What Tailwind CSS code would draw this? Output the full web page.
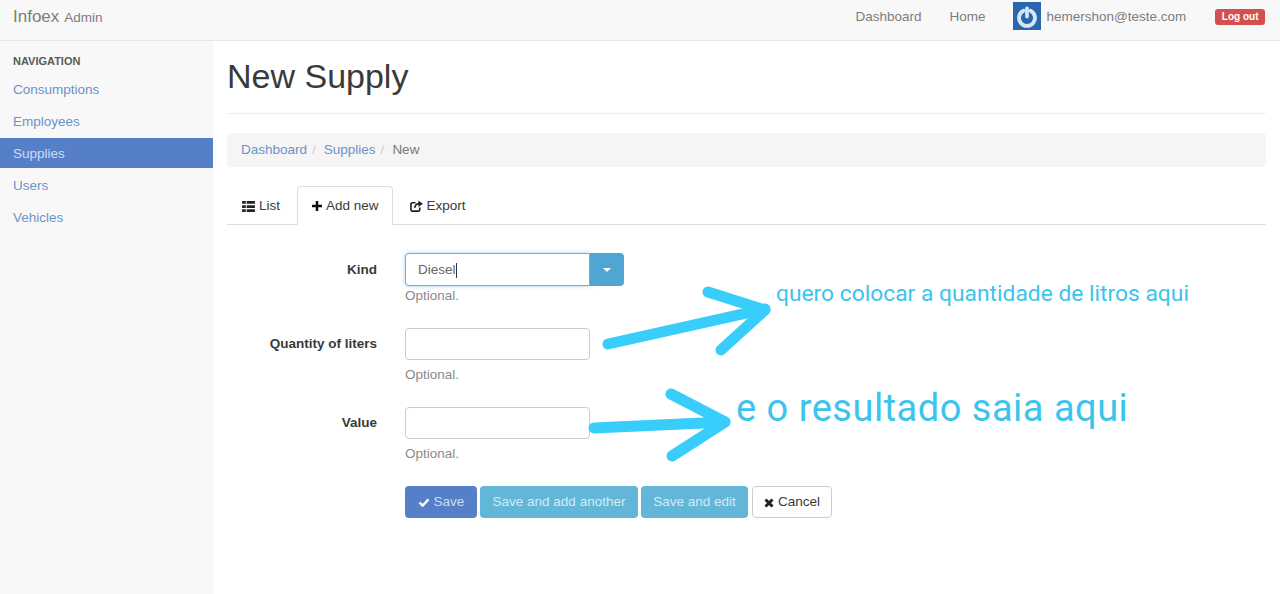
<!DOCTYPE html>
<html lang="en">
<head>
    <meta charset="UTF-8">
    <title>Infoex Admin</title>
    <script src="https://cdn.jsdelivr.net/npm/@tailwindcss/browser@4"></script>
</head>
<body class="relative h-[594px] overflow-hidden bg-white font-['Liberation_Sans',sans-serif] text-[13.5px] text-[#3a3a3a]">
    <!-- Navbar -->
    <nav class="flex h-[41px] items-center border-b border-[#e7e7e7] bg-[#f8f8f8] pb-[8px] pl-[13px] pr-[15px] text-[#7d7d7d]">
        <div class="flex items-baseline gap-[5px] pt-[2px]">
            <span class="text-[17px]">Infoex</span>
            <span class="text-[13.5px]">Admin</span>
        </div>
        <div class="ml-auto flex items-center">
            <span class="pt-[2px]">Dashboard</span>
            <span class="ml-[28px] pt-[2px]">Home</span>
            <div class="ml-[27px] flex h-[28px] w-[28px] items-center justify-center bg-[#2a66b0]">
                <svg viewBox="0 0 28 28" class="h-[28px] w-[28px]" fill="none" stroke="#d5e6f5" stroke-width="3.800" stroke-linecap="round">
                    <path d="M10.400 8.800a8 8 0 1 0 7.200 0" />
                    <path d="M14 6.500v8" />
                </svg>
            </div>
            <span class="ml-[6px] pt-[2px]">hemershon@teste.com</span>
            <span class="ml-[29px] mt-[2px] rounded-[3px] bg-[#d4504f] px-[6.500px] pb-[2px] pt-[1px] text-[10px] font-bold leading-[13px] text-white">Log out</span>
        </div>
    </nav>

    <div class="flex h-[553px]">
        <!-- Sidebar -->
        <aside class="w-[213px] shrink-0 bg-[#f8f8f8] pt-[13px]">
            <div class="px-[13px] text-[11px] font-bold leading-[14px] text-[#5a5a5a]">NAVIGATION</div>
            <ul class="mt-[6px] text-[#6c93c9]">
                <li class="flex h-[32px] items-center px-[13px]">Consumptions</li>
                <li class="flex h-[32px] items-center px-[13px]">Employees</li>
                <li class="mb-[2px] flex h-[30px] items-center bg-[#5580c8] px-[13px] pt-[2px] text-[#cfdcf2]">Supplies</li>
                <li class="flex h-[32px] items-center px-[13px]">Users</li>
                <li class="flex h-[32px] items-center px-[13px]">Vehicles</li>
            </ul>
        </aside>

        <!-- Main -->
        <main class="min-w-0 flex-1 pl-[14px] pr-[14px]">
            <h1 class="flex h-[73px] items-center border-b border-[#eee] pb-[2px] text-[34px] leading-none text-[#3a3a3a]">New Supply</h1>

            <div class="mt-[19px] flex h-[34px] items-center rounded-[4px] bg-[#f5f5f5] px-[14px] pt-[1px]">
                <span class="text-[#6c93c9]">Dashboard</span>
                <span class="mx-[5px] text-[#ccc]">/</span>
                <span class="ml-[3px] text-[#6c93c9]">Supplies</span>
                <span class="mx-[5px] text-[#ccc]">/</span>
                <span class="ml-[3px] text-[#777]">New</span>
            </div>

            <!-- Tabs -->
            <div class="mt-[19px] flex h-[39px] gap-[2px] border-b border-[#ddd]">
                <div class="flex items-center gap-[4px] px-[15px] pt-[2px]">
                    <svg viewBox="0 0 14 12" class="h-[11px] w-[13px]" fill="#222">
                        <path d="M0 0h4v3H0zM5 0h9v3H5zM0 4.500h4v3H0zM5 4.500h9v3H5zM0 9h4v3H0zM5 9h9v3H5z" />
                    </svg>
                    <span>List</span>
                </div>
                <div class="flex h-[39px] items-center gap-[4px] rounded-t-[4px] border border-b-0 border-[#ddd] bg-white pl-[14px] pr-[13px]">
                    <svg viewBox="0 0 12 12" class="h-[10px] w-[10px]" fill="#111">
                        <path d="M4.500 0h3v4.500H12v3H7.500V12h-3V7.500H0v-3h4.500z" />
                    </svg>
                    <span>Add new</span>
                </div>
                <div class="flex items-center gap-[4px] px-[15px] pt-[2px]">
                    <svg viewBox="0 0 14 13" class="h-[12px] w-[13px]" fill="none" stroke="#222" stroke-width="1.800">
                        <path d="M6 3H2.500A1.500 1.500 0 0 0 1 4.500v6A1.500 1.500 0 0 0 2.500 12h6.500a1.500 1.500 0 0 0 1.500-1.500V8" />
                        <path d="M5 8.500C5.500 6 7.500 4 10 4" />
                        <path d="M9 0.500L14 4L9 7.500z" fill="#222" stroke="none" />
                    </svg>
                    <span>Export</span>
                </div>
            </div>

            <!-- Form -->
            <form class="mt-[28px]">
                <div class="flex">
                    <label class="w-[150px] shrink-0 pt-[9px] text-right font-bold leading-[16px]">Kind</label>
                    <div class="ml-[28px]">
                        <div class="flex h-[33px] w-[219px]">
                            <div class="flex w-[185px] items-center rounded-l-[4px] border border-[#66afe9] bg-white pl-[12px] pt-[1px] text-[#666] shadow-[0_0_4px_rgba(102,175,233,0.6)]">
                                Diesel<span class="h-[15px] w-px bg-[#333]"></span>
                            </div>
                            <div class="flex w-[34px] items-center justify-center rounded-r-[4px] bg-[#4fa6d3]">
                                <span class="h-0 w-0 border-x-[4px] border-t-[4px] border-x-transparent border-t-white"></span>
                            </div>
                        </div>
                        <p class="mt-[2px] leading-[16px] text-[#8a8a8a]">Optional.</p>
                    </div>
                </div>

                <div class="mt-[24px] flex">
                    <label class="w-[150px] shrink-0 pt-[8px] text-right font-bold leading-[16px]">Quantity of liters</label>
                    <div class="ml-[28px]">
                        <div class="h-[32px] w-[185px] rounded-[4px] border border-[#ccc] bg-white"></div>
                        <p class="mt-[7px] leading-[16px] text-[#8a8a8a]">Optional.</p>
                    </div>
                </div>

                <div class="mt-[24px] flex">
                    <label class="w-[150px] shrink-0 pt-[8px] text-right font-bold leading-[16px]">Value</label>
                    <div class="ml-[28px]">
                        <div class="h-[32px] w-[185px] rounded-[4px] border border-[#ccc] bg-white"></div>
                        <p class="mt-[7px] leading-[16px] text-[#8a8a8a]">Optional.</p>
                    </div>
                </div>

                <div class="ml-[178px] mt-[24px] flex gap-[3px]">
                    <button type="button" class="flex h-[32px] w-[72px] items-center justify-center gap-[4px] rounded-[4px] bg-[#5580c8] pt-[1px] text-[#cfdcf2]">
                        <svg viewBox="0 0 12 10" class="h-[9px] w-[12px]" fill="none" stroke="#fff" stroke-width="2.600">
                            <path d="M1 5l3.500 3.500L11 1.500" />
                        </svg>
                        Save
                    </button>
                    <button type="button" class="h-[32px] w-[158px] rounded-[4px] bg-[#62b6d8] pt-[1px] text-[#d4ebf5]">Save and add another</button>
                    <button type="button" class="h-[32px] w-[107px] rounded-[4px] bg-[#62b6d8] pt-[1px] text-[#d4ebf5]">Save and edit</button>
                    <button type="button" class="ml-px flex h-[32px] w-[80px] items-center justify-center gap-[4px] rounded-[4px] border border-[#ccc] bg-white pt-[1px]">
                        <svg viewBox="0 0 10 10" class="h-[10px] w-[10px]" fill="none" stroke="#222" stroke-width="3">
                            <path d="M1.500 1.500l7 7M8.500 1.500l-7 7" />
                        </svg>
                        Cancel
                    </button>
                </div>
            </form>
        </main>
    </div>

    <!-- Hand-drawn annotations over the screenshot -->
    <svg class="absolute left-0 top-0 h-[594px] w-[1280px]" viewBox="0 0 1280 594" fill="none" stroke="#38cdfb" stroke-width="11" stroke-linecap="round" stroke-linejoin="round">
        <path d="M608 344L765 309" />
        <path d="M708 292L765 310L721 350" />
        <path d="M594 428L725 422" />
        <path d="M671 394L725 422L672 456" />
    </svg>
    <span class="absolute left-[776px] top-[280px] whitespace-nowrap font-['Roboto',sans-serif] text-[22.800px] leading-[28px] text-[#3cc4ec]">quero colocar a quantidade de litros aqui</span>
    <span class="absolute left-[736px] top-[385px] whitespace-nowrap font-['Roboto',sans-serif] text-[38px] leading-[46px] tracking-[0.5px] text-[#3cc4ec]">e o resultado saia aqui</span>
</body>
</html>
